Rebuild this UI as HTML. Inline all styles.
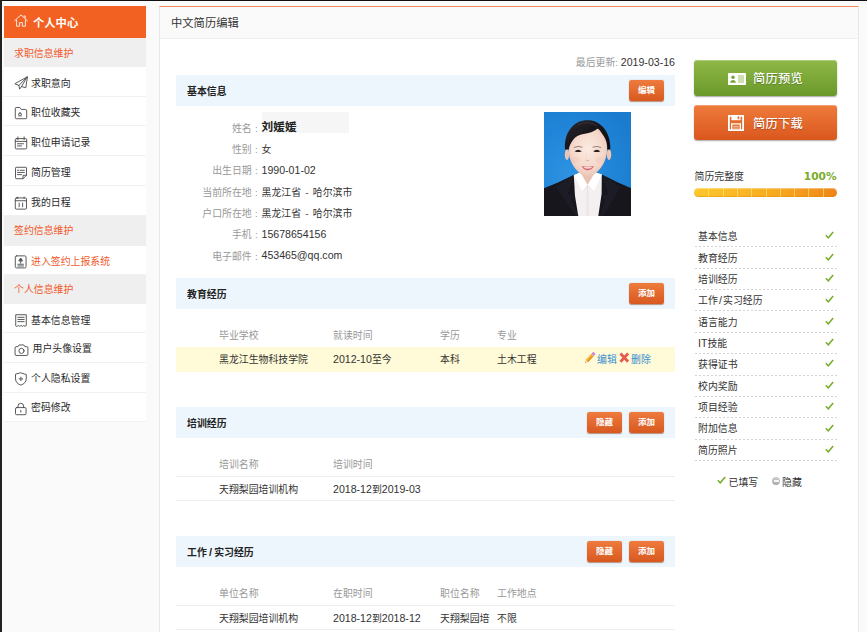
<!DOCTYPE html>
<html lang="zh-CN">
<head>
<meta charset="utf-8">
<title>中文简历编辑</title>
<style>
*{box-sizing:border-box;margin:0;padding:0}
html,body{width:867px;height:632px;overflow:hidden;background:#fafafa}
body{position:relative;font-family:"Liberation Sans","Noto Sans CJK SC",sans-serif;font-size:9.9px;color:#333;line-height:1}
.abs{position:absolute}
.n{font-size:10.6px}
#topb{left:0;top:0;width:867px;height:1px;background:#111}
#leftb{left:0;top:0;width:1.5px;height:632px;background:#222}
/* sidebar */
#side{left:4px;top:6px;width:142px}
#side .hd{height:31.7px;background:#f26122;color:#fff;font-weight:bold;font-size:11.3px;line-height:34px;padding-left:29px;position:relative;overflow:hidden}
#side .hd svg{position:absolute;left:10px;top:8px}
#side .sec{position:absolute;left:0;width:142px;background:#efefef;color:#f15a2b;line-height:29px;padding-top:1.6px;padding-left:10px;font-size:9.9px;overflow:hidden}
#side .it{position:absolute;left:0;width:142px;background:#fff;border-bottom:1px solid #f1f1f1;line-height:29px;padding-top:2.3px;padding-left:27px;color:#2a2a2a;overflow:hidden}
#side .it svg{position:absolute;left:9.7px;top:9.2px}
#side .it.o{color:#f15a2b}
/* main */
#main{left:159px;top:6px;width:700px;height:640px;background:#fff;border:1px solid #e8e8e8;border-top:1px solid #f08a5c}
#mhd{left:160px;top:7px;width:698px;height:31.5px;background:#fafafa;border-bottom:1px solid #eeeeee;font-size:11.3px;line-height:33px;overflow:hidden;padding-left:11px;color:#333}
.bar{left:176px;width:499px;height:30.75px;background:#eef6fd}
.bar b{position:absolute;left:11px;top:1.2px;line-height:31px;font-size:9.9px;color:#222}
.btn{position:absolute;top:4.6px;width:35px;height:21px;border-radius:2.5px;background:linear-gradient(#ee7b3d,#d85920);color:#fff;font-size:8.5px;font-weight:bold;text-align:center;line-height:21.4px;box-shadow:0 0.5px 1px rgba(120,50,10,.5)}
.lab{color:#999;text-align:right;left:166px;width:91.8px;line-height:14px;white-space:nowrap}
.lab i{font-style:normal;margin-left:3.4px}
.val{left:261.5px;line-height:14px;color:#333;white-space:nowrap;word-spacing:1.5px}
.th{color:#999;line-height:14px;white-space:nowrap}
.td{color:#333;line-height:14px;white-space:nowrap}
.row{left:176px;width:499px;height:24px}
a{color:#3a8fd3;text-decoration:none}
/* right */
.big{left:694px;width:143px;height:35.5px;border-radius:3px;color:#fff;font-size:12.2px;line-height:35px;box-shadow:0 1px 1.5px rgba(0,0,0,.35),inset 0 1px 0 rgba(255,255,255,.28)}
.big span{position:absolute;left:59px;top:2px;letter-spacing:.3px;text-shadow:0 1px 1px rgba(0,0,0,.28),0 0 .5px rgba(255,255,255,.8)}
.li{left:694.5px;width:142.5px;height:21.36px;line-height:21px;padding-top:.2px;padding-left:3.5px;color:#333;background:repeating-linear-gradient(90deg,#d4d4d4 0,#d4d4d4 2px,transparent 2px,transparent 4px) left bottom/100% 1px no-repeat}
.li svg{position:absolute;right:3px;top:5.3px}
</style>
</head>
<body>
<div class="abs" id="main"></div>
<div class="abs" id="mhd">中文简历编辑</div>

<!-- sidebar -->
<div class="abs" id="side">
  <div class="hd"><svg width="14" height="14" viewBox="0 0 14 14" fill="none" stroke="#fff" stroke-width="0.85"><path d="M0.300 7 L7 0.900 L13.700 7"/><path d="M2.6 5.6 V12.2 H5.6 V8.6 H8.4 V12.2 H11.4 V5.6"/><path d="M9.6 2 H11.2 V4.2"/></svg>个人中心</div>
  <div class="sec" style="top:31.70px;height:28.90px;">求职信息维护</div>
  <div class="it" style="top:60.60px;height:29.94px;"><svg width="14" height="14" viewBox="0 0 13 13" fill="none" stroke="#4a4a4a" stroke-width="0.85" stroke-linejoin="round" stroke-linecap="round"><path d="M12.200 0.800 L0.800 7.200 L4.600 8.800 L5.200 12.200 L7 9.800 L10.600 10.800 Z"/><path d="M4.600 8.800 L12.200 0.800 L7 9.800"/></svg>求职意向</div>
  <div class="it" style="top:90.54px;height:29.94px;padding-top:1.7px"><svg width="14" height="14" viewBox="0 0 13 13" fill="none" stroke="#4a4a4a" stroke-width="0.85" stroke-linejoin="round" stroke-linecap="round"><path d="M1.200 2.200 Q1.200 1.400 2 1.400 H5.400 L6.800 3.200 H10.600 Q11.800 3.200 11.800 4.600 V11 Q11.800 11.800 11 11.800 H2 Q1.200 11.800 1.200 11 Z"/><path d="M5.600 6 L6.100 7.300 L7.400 7.400 L6.400 8.300 L6.700 9.600 L5.600 8.900 L4.500 9.600 L4.800 8.300 L3.800 7.400 L5.100 7.300 Z" stroke-width="0.700"/></svg>职位收藏夹</div>
  <div class="it" style="top:120.48px;height:29.94px;padding-top:1.8px"><svg width="14" height="14" viewBox="0 0 13 13" fill="none" stroke="#4a4a4a" stroke-width="0.85" stroke-linejoin="round" stroke-linecap="round"><rect x="1.200" y="2.400" width="10.600" height="9.600" rx="1"/><path d="M1.200 5 H11.800 M3.600 0.800 V3.400 M9.400 0.800 V3.400 M3.200 7.200 H8.800 M3.200 9.200 H7"/></svg>职位申请记录</div>
  <div class="it" style="top:150.42px;height:29.94px;padding-top:1.3px"><svg width="14" height="14" viewBox="0 0 13 13" fill="none" stroke="#4a4a4a" stroke-width="0.85" stroke-linejoin="round" stroke-linecap="round"><path d="M1.400 1.800 Q1.400 1.200 2 1.200 H11 Q11.600 1.200 11.600 1.800 V8.600 L8.400 11.800 H2 Q1.400 11.800 1.400 11.200 Z"/><path d="M11.600 8.600 H8.400 V11.800 M3.200 4 H4.200 M5.600 4 H9.600 M3.200 6 H9.600 M3.200 8 H7"/></svg>简历管理</div>
  <div class="it" style="top:180.36px;height:29.94px;padding-top:1.3px"><svg width="14" height="14" viewBox="0 0 13 13" fill="none" stroke="#4a4a4a" stroke-width="0.85" stroke-linejoin="round" stroke-linecap="round"><rect x="1.200" y="1.800" width="10.400" height="10.400" rx="1"/><path d="M1.200 4.400 H11.600 M4.800 6.600 V10 M8 6.600 V10 M3.400 1 V2.200 M9.400 1 V2.200"/></svg>我的日程</div>
  <div class="sec" style="top:210.30px;height:29.30px;padding-top:0">签约信息维护</div>
  <div class="it o" style="top:239.60px;height:29.20px;padding-top:1.4px"><svg width="14" height="14" viewBox="0 0 13 13" fill="none" stroke="#4a4a4a" stroke-width="0.85" stroke-linejoin="round" stroke-linecap="round"><rect x="1.200" y="0.800" width="10" height="11.200" rx="1.200"/><path d="M4.600 5.200 L6.200 2.800 L7.800 5.200 Z" fill="#4a4a4a"/><path d="M6.200 5.200 V7.600 M3.600 8.600 H8.800 M3.600 10.200 H8.800"/></svg>进入签约上报系统</div>
  <div class="sec" style="top:268.80px;height:28.90px;padding-top:.7px">个人信息维护</div>
  <div class="it" style="top:297.70px;height:29.62px;"><svg width="14" height="14" viewBox="0 0 13 13" fill="none" stroke="#4a4a4a" stroke-width="0.85" stroke-linejoin="round" stroke-linecap="round"><path d="M1.600 11.600 V1.600 H11.400 V11.600 L10.200 12.400 L9 11.600 L7.700 12.400 L6.500 11.600 L5.300 12.400 L4 11.600 L2.800 12.400 Z"/><path d="M3.600 4 H9.400 M3.600 6 H9.400 M3.600 8 H9.400"/></svg>基本信息管理</div>
  <div class="it" style="top:327.32px;height:29.62px;padding-left:28.5px;padding-top:0.8px"><svg width="15" height="14" viewBox="0 0 14 13" fill="none" stroke="#4a4a4a" stroke-width="0.85" stroke-linejoin="round" stroke-linecap="round"><path d="M1 4.400 Q1 3.400 2 3.400 H3.800 L4.800 1.800 H9.200 L10.200 3.400 H12 Q13 3.400 13 4.400 V10.600 Q13 11.600 12 11.600 H2 Q1 11.600 1 10.600 Z"/><circle cx="7" cy="7.300" r="2.400"/></svg>用户头像设置</div>
  <div class="it" style="top:356.94px;height:29.62px;padding-top:1.4px"><svg width="14" height="14" viewBox="0 0 13 13" fill="none" stroke="#4a4a4a" stroke-width="0.85" stroke-linejoin="round" stroke-linecap="round"><path d="M6.400 0.800 L11.400 2.400 V6.400 C11.400 9.200 9.200 11.200 6.400 12.200 C3.600 11.200 1.400 9.200 1.400 6.400 V2.400 Z"/><path d="M6.400 4.800 V8 M4.800 6.400 H8"/></svg>个人隐私设置</div>
  <div class="it" style="top:386.56px;height:29.64px;padding-top:0.9px"><svg width="14" height="14" viewBox="0 0 13 13" fill="none" stroke="#4a4a4a" stroke-width="0.85" stroke-linejoin="round" stroke-linecap="round"><rect x="1.400" y="5.200" width="9.800" height="6.600" rx="1"/><path d="M3.700 5.200 V3.800 A2.600 2.600 0 0 1 8.900 3.800 V5.200 M6.300 7.800 V9.400"/></svg>密码修改</div>
</div>

<!-- last update -->
<div class="abs" style="left:476px;width:199px;top:55px;line-height:14px;text-align:right;color:#999;white-space:nowrap">最后更新: <span class="n" style="color:#333">2019-03-16</span></div>

<!-- basic info -->
<div class="abs bar" style="top:75px"><b>基本信息</b><div class="btn" style="left:453px">编辑</div></div>
<div class="abs" style="left:261.5px;top:111.5px;width:87.5px;height:21.5px;background:#f6f6f6"></div>
<div class="abs lab" style="top:121.80px">姓名<i>:</i></div><div class="abs val" style="top:120.00px;font-weight:bold;font-size:11.7px;color:#222">刘媛媛</div>
<div class="abs lab" style="top:143.13px">性别<i>:</i></div><div class="abs val" style="top:143.13px">女</div>
<div class="abs lab" style="top:164.46px">出生日期<i>:</i></div><div class="abs val n" style="top:162.76px">1990-01-02</div>
<div class="abs lab" style="top:185.79px">当前所在地<i>:</i></div><div class="abs val" style="top:185.79px">黑龙江省 - 哈尔滨市</div>
<div class="abs lab" style="top:207.12px">户口所在地<i>:</i></div><div class="abs val" style="top:207.12px">黑龙江省 - 哈尔滨市</div>
<div class="abs lab" style="top:228.45px">手机<i>:</i></div><div class="abs val n" style="top:226.75px">15678654156</div>
<div class="abs lab" style="top:249.78px">电子邮件<i>:</i></div><div class="abs val n" style="top:248.08px">453465@qq.com</div>

<!-- photo -->
<svg class="abs" style="left:544px;top:112px" width="87" height="104" viewBox="0 0 87 104">
  <defs>
    <radialGradient id="bg" cx="0.3" cy="0.62" r="0.8"><stop offset="0" stop-color="#2f93e2"/><stop offset="0.6" stop-color="#2085d8"/><stop offset="1" stop-color="#1b7ccf"/></radialGradient>
    <radialGradient id="sk" cx="0.5" cy="0.45" r="0.6"><stop offset="0" stop-color="#fbeae2"/><stop offset="0.7" stop-color="#f4d6c8"/><stop offset="1" stop-color="#e6bba9"/></radialGradient>
    <linearGradient id="hr" x1="0" y1="0" x2="1" y2="1"><stop offset="0" stop-color="#2c2a30"/><stop offset="0.5" stop-color="#17151a"/><stop offset="1" stop-color="#100e12"/></linearGradient>
    <filter id="sf" x="-5%" y="-5%" width="110%" height="110%"><feGaussianBlur stdDeviation="0.45"/></filter>
    <clipPath id="pc"><rect width="87" height="104"/></clipPath>
  </defs>
  <rect width="87" height="104" fill="url(#bg)"/>
  <g clip-path="url(#pc)"><g filter="url(#sf)">
    <!-- suit -->
    <path d="M-2 77 L14 70.500 L29.600 63 L43.600 76 L57.900 62.500 L74 70.500 L89 77 V106 H-2 Z" fill="#17171e"/>
    <path d="M29.600 63 L24 82 L30 84 L27 88 L36.500 106 H33 L12 75 Z" fill="#1d1d25"/>
    <path d="M57.900 62.500 L64 82 L58 84 L61 88 L55.500 106 H58 L76 75 Z" fill="#1d1d25"/>
    <!-- shirt -->
    <path d="M29.800 63.200 L36.800 60 H50.500 L57.800 62.600 L57.600 82 L54 106 H34.600 L31 84 Z" fill="#f4eff1"/>
    <path d="M43.600 73 L42.800 106 M43.600 73 L44.600 106" stroke="#e2d9dd" stroke-width="0.500" fill="none"/>
    <!-- neck -->
    <path d="M36.800 56 H50.800 V66 L43.600 73 L36.800 66 Z" fill="#e9c3b2"/>
    <!-- collar -->
    <path d="M29.800 63.200 L36.600 60.500 L43.600 73 L38.600 79.500 Z" fill="#ffffff"/>
    <path d="M57.800 62.600 L50.800 60.500 L43.600 73 L49.600 79.500 Z" fill="#ffffff"/>
    <path d="M38.600 79.500 L43.600 73 L49.600 79.500" stroke="#ddd3d8" stroke-width="0.500" fill="none"/>
    <!-- ears -->
    <ellipse cx="23" cy="42.500" rx="2.200" ry="5.400" fill="#eec5b3"/>
    <ellipse cx="65" cy="42.500" rx="2.200" ry="5.400" fill="#eec5b3"/>
    <!-- face -->
    <path d="M24.500 34 C24 20 32 15 44 15 C56 15 63.800 20 63.300 34 C63.300 44 61 51 55.500 57.500 C51.500 62 47.500 64.800 43.600 64.800 C39.800 64.800 36 62 32 57.500 C26.500 51 24.500 44 24.500 34 Z" fill="url(#sk)"/>
    <!-- hair -->
    <path d="M21 37.500 C20 25 25 14.500 34.500 10 C40 7.600 47.500 7.600 52.600 10.200 C61.500 14.500 66.800 25 66.300 37.500 L63.300 37.500 C63.300 32 62.300 28 60 24.500 C58 21.500 56 18.500 53.800 16.600 C50 19.600 46 21.200 41 21.800 C35.500 22.600 31.500 24.500 29 28 C26.500 31.500 25.200 34 24.800 37.500 Z" fill="url(#hr)"/>
    <path d="M34 13 C40 9.500 48 10 53 14" stroke="#3d3a44" stroke-width="1.200" fill="none" opacity="0.600"/>
    <!-- brows -->
    <path d="M29.800 35.600 Q34 33.400 38.400 35.200" stroke="#6b5048" stroke-width="0.900" fill="none" opacity="0.750"/>
    <path d="M48.600 35.200 Q53 33.400 57.200 35.600" stroke="#6b5048" stroke-width="0.900" fill="none" opacity="0.750"/>
    <!-- eyes -->
    <path d="M30.600 39.200 Q34 36.200 37.800 39.200 Q34 41 30.600 39.200 Z" fill="#2a1d1d"/>
    <path d="M49.200 39.200 Q52.800 36.200 56.400 39.200 Q52.800 41 49.200 39.200 Z" fill="#2a1d1d"/>
    <!-- nose -->
    <path d="M41.600 48 Q43.600 49.400 45.600 48" stroke="#d3a08f" stroke-width="0.800" fill="none"/>
    <path d="M42.600 41 L42 46.500" stroke="#f0d2c4" stroke-width="0.700" fill="none"/>
    <!-- cheeks -->
    <ellipse cx="31.500" cy="48" rx="4" ry="3" fill="#f3b9ad" opacity="0.250"/>
    <ellipse cx="55.500" cy="48" rx="4" ry="3" fill="#f3b9ad" opacity="0.250"/>
    <!-- mouth -->
    <path d="M37.600 54 Q43.600 55.600 50 54 Q47.800 58.400 43.600 58.400 Q39.600 58.400 37.600 54 Z" fill="#d96a7a"/>
    <path d="M39.200 54.700 Q43.600 55.800 48.600 54.700 Q46.600 56.600 43.600 56.600 Q41 56.600 39.200 54.700 Z" fill="#fff6f4"/>
  </g></g>
</svg>

<!-- education -->
<div class="abs bar" style="top:278.25px"><b>教育经历</b><div class="btn" style="left:453px">添加</div></div>
<div class="abs th" style="left:219px;top:328.5px">毕业学校</div>
<div class="abs th" style="left:333px;top:328.5px">就读时间</div>
<div class="abs th" style="left:440px;top:328.5px">学历</div>
<div class="abs th" style="left:497px;top:328.5px">专业</div>
<div class="abs row" style="top:347px;height:24.5px;background:#fffad7"></div>
<div class="abs td" style="left:219px;top:353.0px">黑龙江生物科技学院</div>
<div class="abs td" style="left:333px;top:351.9px"><span class="n">2012-10</span>至今</div>
<div class="abs td" style="left:440px;top:353.0px">本科</div>
<div class="abs td" style="left:497px;top:353.0px">土木工程</div>
<svg class="abs" style="left:583.800px;top:351.300px" width="13" height="13" viewBox="0 0 12 12"><g transform="translate(1.100,10.900) rotate(-47)"><path d="M0 0 L2.400 -1.500 V1.500 Z" fill="#ecd2a0"/><path d="M0 0 L0.900 -0.560 V0.560 Z" fill="#5a4a3a"/><rect x="2.400" y="-1.500" width="7.200" height="3" fill="#f5a425"/><rect x="2.400" y="-1.500" width="7.200" height="1" fill="#fbc55a"/><rect x="2.400" y="0.700" width="7.200" height="0.800" fill="#d98a1a"/><rect x="9.600" y="-1.500" width="0.700" height="3" fill="#b9b0a8"/><rect x="10.300" y="-1.500" width="2.200" height="3" rx="0.600" fill="#d07fd0"/></g></svg>
<a class="abs td" style="left:597px;top:353px;color:#3a8fd3">编辑</a>
<svg class="abs" style="left:618.500px;top:352px" width="10.500" height="11" viewBox="0 0 10.500 11"><path d="M1.500 1.500 L9.100 9.700 M9.100 1.500 L1.500 9.700" stroke="#e65a50" stroke-width="2.800" stroke-linecap="butt"/></svg>
<a class="abs td" style="left:631px;top:353px;color:#3a8fd3">删除</a>

<!-- training -->
<div class="abs bar" style="top:407.25px"><b>培训经历</b><div class="btn" style="left:411px">隐藏</div><div class="btn" style="left:453px">添加</div></div>
<div class="abs th" style="left:219px;top:457.5px">培训名称</div>
<div class="abs th" style="left:333px;top:457.5px">培训时间</div>
<div class="abs row" style="top:476px;border-top:1px solid #eee;border-bottom:1px solid #eee;height:25px"></div>
<div class="abs td" style="left:219px;top:483.0px">天翔梨园培训机构</div>
<div class="abs td" style="left:333px;top:481.9px"><span class="n">2018-12</span>到<span class="n">2019-03</span></div>

<!-- work -->
<div class="abs bar" style="top:536.25px"><b>工作<span style="font-size:11px;margin:0 2.2px">/</span>实习经历</b><div class="btn" style="left:411px">隐藏</div><div class="btn" style="left:453px">添加</div></div>
<div class="abs th" style="left:219px;top:586.5px">单位名称</div>
<div class="abs th" style="left:333px;top:586.5px">在职时间</div>
<div class="abs th" style="left:440px;top:586.5px">职位名称</div>
<div class="abs th" style="left:497px;top:586.5px">工作地点</div>
<div class="abs row" style="top:605px;border-top:1px solid #eee;border-bottom:1px solid #eee;height:25px"></div>
<div class="abs td" style="left:219px;top:612.0px">天翔梨园培训机构</div>
<div class="abs td" style="left:333px;top:610.9px"><span class="n">2018-12</span>到<span class="n">2018-12</span></div>
<div class="abs td" style="left:440px;top:612.0px">天翔梨园培</div>
<div class="abs td" style="left:497px;top:612.0px">不限</div>

<!-- right column -->
<div class="abs big" style="top:60px;background:linear-gradient(#8fb848,#6a9929)"><svg class="abs" style="left:34px;top:12.700px" width="18" height="12" viewBox="0 0 18 12"><rect width="18" height="12" rx="0.800" fill="#fff"/><circle cx="5" cy="4.200" r="1.700" fill="#78a535"/><path d="M2.200 9.800 C2.200 6.200 7.800 6.200 7.800 9.800 Z" fill="#78a535"/><path d="M10 3 H16 M10 5 H16 M10 7 H16 M10 9 H16" stroke="#9dbf63" stroke-width="1.100"/></svg><span>简历预览</span></div>
<div class="abs big" style="top:104.5px;background:linear-gradient(#ee7b3b,#da571d)"><svg class="abs" style="left:33.500px;top:10px" width="16" height="16" viewBox="0 0 16 16" fill="none" stroke="#fff"><path d="M0.900 0.900 H15.100 V15.100 H0.900 Z" stroke-width="1.800"/><path d="M3.400 0.600 H12.600 V5.200 H3.400 Z" fill="#fff" stroke="none"/><path d="M9.600 1.400 H11.200 V4.200 H9.600 Z" fill="#e4672b" stroke="none"/><path d="M3.700 15 V8.900 H12.300 V15" stroke-width="1.400"/><path d="M5.200 11.300 H10.800 M5.200 13.100 H10.800" stroke-width="0.900" opacity=".75"/></svg><span>简历下载</span></div>

<div class="abs" style="left:694.5px;top:170.200px;line-height:14px;color:#333;font-size:9.9px">简历完整度</div>
<div class="abs" style="left:737px;width:99.500px;top:168.700px;line-height:14px;text-align:right;font-family:'DejaVu Sans',sans-serif;font-weight:bold;font-size:10.6px;color:#7aab2c">100%</div>
<div class="abs" style="left:694px;top:188.300px;width:143px;height:8.800px;border-radius:4.400px;background:linear-gradient(90deg,#fcc82c,#f7a820 60%,#ee8418);box-shadow:inset 0 -1px 1px rgba(220,120,0,.35), inset 0 1px 1px rgba(255,255,255,.4);overflow:hidden">
  <i style="position:absolute;top:0;left:14px;width:1px;height:9px;background:rgba(255,236,150,.55)"></i><i style="position:absolute;top:0;left:29px;width:1px;height:9px;background:rgba(255,236,150,.55)"></i><i style="position:absolute;top:0;left:43px;width:1px;height:9px;background:rgba(255,236,150,.55)"></i><i style="position:absolute;top:0;left:57px;width:1px;height:9px;background:rgba(255,236,150,.55)"></i><i style="position:absolute;top:0;left:72px;width:1px;height:9px;background:rgba(255,236,150,.55)"></i><i style="position:absolute;top:0;left:86px;width:1px;height:9px;background:rgba(255,236,150,.55)"></i><i style="position:absolute;top:0;left:100px;width:1px;height:9px;background:rgba(255,236,150,.55)"></i><i style="position:absolute;top:0;left:114px;width:1px;height:9px;background:rgba(255,236,150,.55)"></i><i style="position:absolute;top:0;left:129px;width:1px;height:9px;background:rgba(255,236,150,.55)"></i>
</div>

<div class="abs li" style="top:226.00px">基本信息<svg width="9" height="8" viewBox="0 0 9 8"><path d="M0.800 4.200 L3.300 6.800 L8.200 1" fill="none" stroke="#76ad2e" stroke-width="1.500"/></svg></div>
<div class="abs li" style="top:247.36px">教育经历<svg width="9" height="8" viewBox="0 0 9 8"><path d="M0.800 4.200 L3.300 6.800 L8.200 1" fill="none" stroke="#76ad2e" stroke-width="1.500"/></svg></div>
<div class="abs li" style="top:268.72px">培训经历<svg width="9" height="8" viewBox="0 0 9 8"><path d="M0.800 4.200 L3.300 6.800 L8.200 1" fill="none" stroke="#76ad2e" stroke-width="1.500"/></svg></div>
<div class="abs li" style="top:290.08px">工作<span style="font-size:10.6px;margin:0 1.2px">/</span>实习经历<svg width="9" height="8" viewBox="0 0 9 8"><path d="M0.800 4.200 L3.300 6.800 L8.200 1" fill="none" stroke="#76ad2e" stroke-width="1.500"/></svg></div>
<div class="abs li" style="top:311.44px">语言能力<svg width="9" height="8" viewBox="0 0 9 8"><path d="M0.800 4.200 L3.300 6.800 L8.200 1" fill="none" stroke="#76ad2e" stroke-width="1.500"/></svg></div>
<div class="abs li" style="top:332.80px"><span class="n">IT</span>技能<svg width="9" height="8" viewBox="0 0 9 8"><path d="M0.800 4.200 L3.300 6.800 L8.200 1" fill="none" stroke="#76ad2e" stroke-width="1.500"/></svg></div>
<div class="abs li" style="top:354.16px">获得证书<svg width="9" height="8" viewBox="0 0 9 8"><path d="M0.800 4.200 L3.300 6.800 L8.200 1" fill="none" stroke="#76ad2e" stroke-width="1.500"/></svg></div>
<div class="abs li" style="top:375.52px">校内奖励<svg width="9" height="8" viewBox="0 0 9 8"><path d="M0.800 4.200 L3.300 6.800 L8.200 1" fill="none" stroke="#76ad2e" stroke-width="1.500"/></svg></div>
<div class="abs li" style="top:396.88px">项目经验<svg width="9" height="8" viewBox="0 0 9 8"><path d="M0.800 4.200 L3.300 6.800 L8.200 1" fill="none" stroke="#76ad2e" stroke-width="1.500"/></svg></div>
<div class="abs li" style="top:418.24px">附加信息<svg width="9" height="8" viewBox="0 0 9 8"><path d="M0.800 4.200 L3.300 6.800 L8.200 1" fill="none" stroke="#76ad2e" stroke-width="1.500"/></svg></div>
<div class="abs li" style="top:439.60px">简历照片<svg width="9" height="8" viewBox="0 0 9 8"><path d="M0.800 4.200 L3.300 6.800 L8.200 1" fill="none" stroke="#76ad2e" stroke-width="1.500"/></svg></div>

<svg class="abs" style="left:717px;top:476.300px" width="9" height="8" viewBox="0 0 9 8"><path d="M0.800 4.200 L3.300 6.800 L8.200 1" fill="none" stroke="#76ad2e" stroke-width="1.500"/></svg>
<div class="abs" style="left:728.5px;top:475.5px;line-height:14px;color:#333">已填写</div>
<div class="abs" style="left:772px;top:477px;width:8px;height:8px;border-radius:4px;background:linear-gradient(#cfcfcf,#a8a8a8)"><div class="abs" style="left:1.500px;top:3.300px;width:5px;height:1.400px;background:#f4f4f4"></div></div>
<div class="abs" style="left:782px;top:475.5px;line-height:14px;color:#333">隐藏</div>

<div class="abs" id="topb"></div>
<div class="abs" id="leftb"></div>
</body>
</html>
